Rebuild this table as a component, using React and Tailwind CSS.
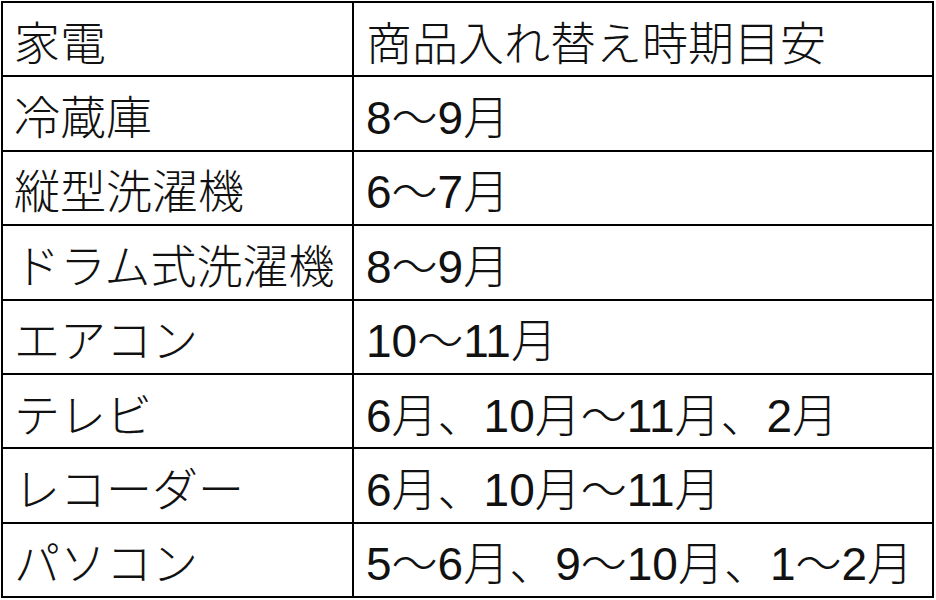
import React from 'react';

const ROWS = [
    ['家電', '商品入れ替え時期目安'],
    ['冷蔵庫', '8〜9月'],
    ['縦型洗濯機', '6〜7月'],
    ['ドラム式洗濯機', '8〜9月'],
    ['エアコン', '10〜11月'],
    ['テレビ', '6月、10月〜11月、2月'],
    ['レコーダー', '6月、10月〜11月'],
    ['パソコン', '5〜6月、9〜10月、1〜2月'],
];

const App = () => {
    return (
        <div className="w-[936px] h-[600px] bg-white pt-[1px] pl-[1px]">
            <div
                className="w-[933px] h-[597px] bg-black p-[2px] grid grid-cols-[349px_1fr] grid-rows-8 gap-[2px] text-[46px] font-light text-[#111]"
                style={{ fontFamily: '"Liberation Sans", "Noto Sans CJK JP", sans-serif' }}
            >
                {ROWS.map(([name, period]) => (
                    <React.Fragment key={name}>
                        <div className="bg-white flex items-center pl-[11px] pt-[9px] leading-none whitespace-nowrap">
                            {name}
                        </div>
                        <div className="bg-white flex items-center pl-[12px] pt-[9px] leading-none whitespace-nowrap">
                            {period}
                        </div>
                    </React.Fragment>
                ))}
            </div>
        </div>
    );
};

export default App;
